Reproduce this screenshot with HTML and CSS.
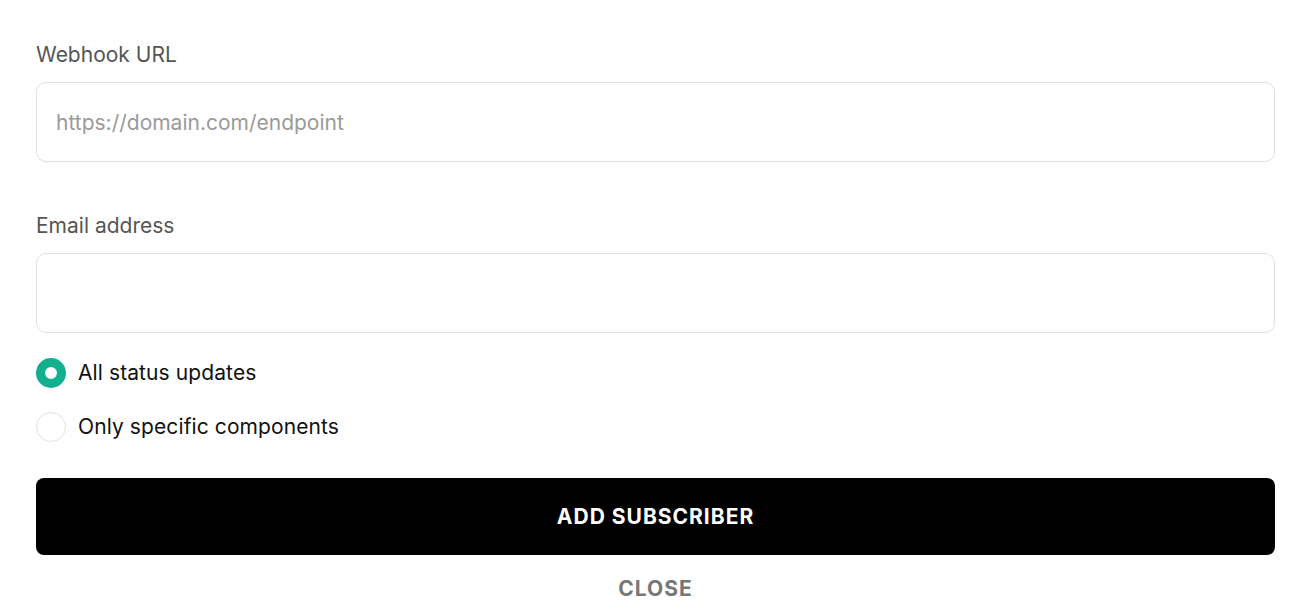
FILE: index.html
```html
<!DOCTYPE html>
<html lang="en">
<head>
<meta charset="UTF-8">
<title>Add Subscriber</title>
<link rel="stylesheet" href="styles.css">
</head>
<body>
    <div class="container">
        <div class="field">
            <label class="field-label" for="webhook">Webhook URL</label>
            <input class="field-input" id="webhook" type="text" placeholder="https://domain.com/endpoint">
        </div>

        <div class="field field-last">
            <label class="field-label" for="email">Email address</label>
            <input class="field-input" id="email" type="text">
        </div>

        <div class="radio-group">
            <label class="radio-row">
                <span class="radio checked"></span>
                All status updates
            </label>
            <label class="radio-row">
                <span class="radio"></span>
                Only specific components
            </label>
        </div>

        <button class="add-button">ADD SUBSCRIBER</button>
        <button class="close-button">CLOSE</button>
    </div>
</body>
</html>
```

FILE: styles.css
```css
body {
    font-family: Inter, "Noto Sans", Arial, sans-serif;
    background-color: #fff;
    margin: 0;
    padding: 0;
}

.container {
    padding: 42px 40px 0 36px;
    display: flex;
    flex-direction: column;
}

.field {
    display: flex;
    flex-direction: column;
    margin-bottom: 51px;
}

.field-last {
    margin-bottom: 25px;
}

.field-label {
    font-size: 21px;
    color: #555;
    line-height: 26px;
    margin-bottom: 14px;
}

.field-input {
    height: 80px;
    box-sizing: border-box;
    border: 1px solid #e0e0e0;
    border-radius: 10px;
    padding: 0 19px;
    font-family: inherit;
    font-size: 21px;
    color: #222;
    outline: none;
}

.field-input::placeholder {
    color: #9a9a9a;
}

.radio-group {
    display: flex;
    flex-direction: column;
    gap: 24px;
}

.radio-row {
    display: flex;
    align-items: center;
    gap: 12px;
    font-size: 21px;
    letter-spacing: 0.1px;
    color: #111;
    line-height: 30px;
}

.radio {
    width: 30px;
    height: 30px;
    box-sizing: border-box;
    border-radius: 50%;
    border: 1px solid #e0e0e0;
    background-color: #fff;
}

.radio.checked {
    border: 9px solid #12b08e;
}

.add-button {
    margin-top: 36px;
    height: 77px;
    background-color: #000;
    color: #fff;
    border: none;
    border-radius: 8px;
    font-family: inherit;
    font-size: 21px;
    font-weight: 700;
    letter-spacing: 1px;
    cursor: pointer;
}

.close-button {
    margin-top: 20px;
    background: none;
    border: none;
    color: #777;
    font-family: inherit;
    font-size: 21px;
    font-weight: 700;
    letter-spacing: 1px;
    cursor: pointer;
}
```
